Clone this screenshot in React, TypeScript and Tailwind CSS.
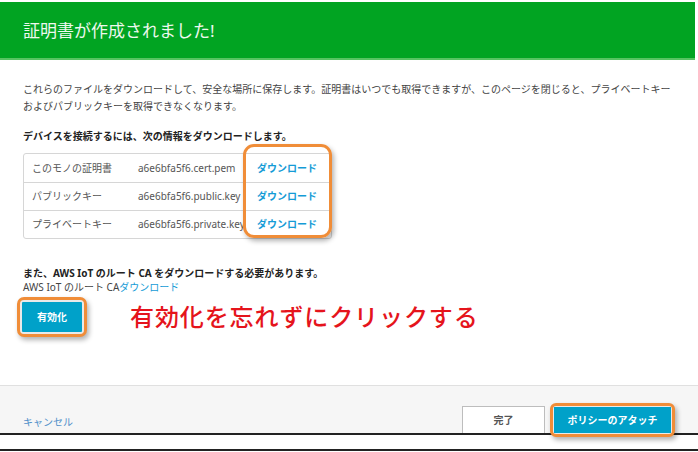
import React from "react";

const rows = [
  { name: "このモノの証明書", file: "a6e6bfa5f6.cert.pem" },
  { name: "パブリックキー", file: "a6e6bfa5f6.public.key" },
  { name: "プライベートキー", file: "a6e6bfa5f6.private.key" },
];

export default function App() {
  return (
    <div
      className="w-[698px] h-[452px] bg-white flex flex-col overflow-hidden text-[#444]"
      style={{ fontFamily: '"Noto Sans", "Noto Sans CJK JP", sans-serif' }}
    >
      <header className="mt-[2px] mr-[3px] h-[58px] bg-[#01a422] border-b-2 border-[#57c462] flex items-center pl-[23px]">
        <h1 className="text-[17px] font-normal text-[#eef8ee] leading-none">証明書が作成されました!</h1>
      </header>

      <main className="flex-1 px-[23px]">
        <p className="mt-[21px] text-[10px] leading-[17px] text-[#444]">
          これらのファイルをダウンロードして、安全な場所に保存します。証明書はいつでも取得できますが、このページを閉じると、プライベートキー
          <br />
          およびパブリックキーを取得できなくなります。
        </p>

        <p className="mt-[13px] text-[10px] leading-[17px] font-bold text-[#222]">
          デバイスを接続するには、次の情報をダウンロードします。
        </p>

        <div className="relative mt-[8px] w-[309px]">
          <div className="border border-[#d6d6d6] rounded-[3px] text-[10px] text-[#555]">
            {rows.map((r, i) => (
              <div
                key={r.name}
                className={`flex items-center h-[28px] ${i > 0 ? "border-t border-[#d6d6d6]" : ""}`}
              >
                <div className="w-[106px] pl-[8px] whitespace-nowrap">{r.name}</div>
                <div className="w-[119px] pl-[8px] whitespace-nowrap overflow-hidden">{r.file}</div>
                <div className="pl-[8px] font-bold text-[#159bd6] whitespace-nowrap">ダウンロード</div>
              </div>
            ))}
          </div>
          <div className="absolute left-[220px] top-[-9px] w-[89px] h-[94px] border-[3px] border-[#f08d38] rounded-[11px] shadow-[2px_3px_5px_rgba(0,0,0,0.3)]" />
        </div>

        <p className="mt-[27px] text-[10px] leading-[14px] font-bold text-[#222]">
          また、AWS IoT のルート CA をダウンロードする必要があります。
        </p>
        <p className="text-[10px] leading-[14px] text-[#444]">
          AWS IoT のルート CA<span className="text-[#159bd6]">ダウンロード</span>
        </p>

        <div className="mt-[3px] flex items-center">
          <div className="ml-[-6px] border-[3px] border-[#f08d38] rounded-[7px] p-[2px] bg-[#e9e9e9] shadow-[2px_3px_5px_rgba(0,0,0,0.3)]">
            <button className="w-[60px] h-[30px] bg-[#00a1c9] text-white text-[10px] font-bold rounded-[1px]">
              有効化
            </button>
          </div>
          <span className="ml-[43px] text-[24px] leading-none tracking-[0.9px] font-medium text-[#e5141c]">
            有効化を忘れずにクリックする
          </span>
        </div>
      </main>

      <footer>
        <div className="h-[50px] border-t border-[#e0e0e0] bg-[#f6f6f6] border-b-2 border-b-[#222] flex items-end pl-[23px] pr-[23px]">
          <span className="mb-[4px] text-[10px] leading-[14px] text-[#4f8fc9]">キャンセル</span>
          <div className="flex-1" />
          <button className="w-[83px] h-[27px] bg-white border border-b-0 border-[#bdbdbd] text-[10px] font-bold text-[#555]">
            完了
          </button>
          <div className="ml-[5px] mb-[-4px] border-[3px] border-[#f08d38] rounded-[6px] p-[1px] bg-[#eaeaea] shadow-[2px_3px_5px_rgba(0,0,0,0.3)]">
            <div className="w-[117px] h-[26px] bg-[#00a1c9] flex items-center justify-center text-white text-[10px] font-bold">
              ポリシーのアタッチ
            </div>
          </div>
        </div>
        <div className="h-[14px]" />
        <div className="h-[2px] bg-[#222]" />
        <div className="h-[1px]" />
      </footer>
    </div>
  );
}
